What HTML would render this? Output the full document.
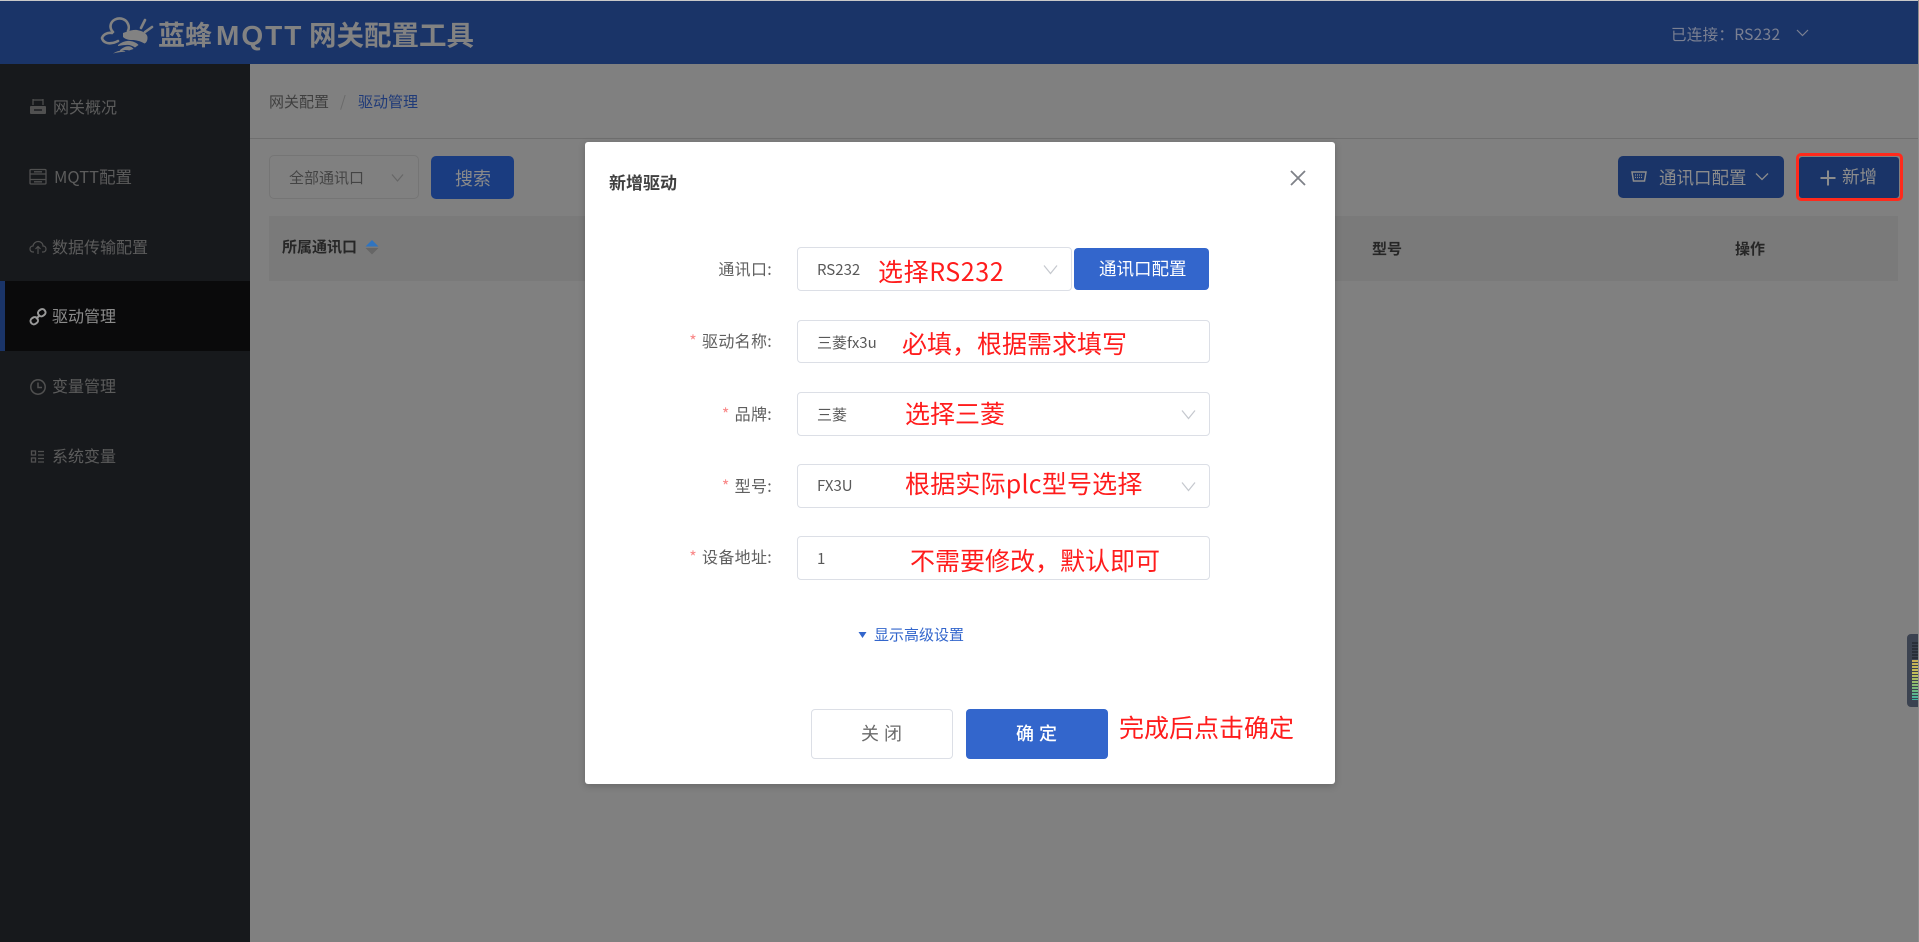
<!DOCTYPE html>
<html lang="zh-CN">
<head>
<meta charset="utf-8">
<title>新增驱动</title>
<style>
html,body{margin:0;padding:0;width:1919px;height:942px;overflow:hidden;background:#808080}
body{position:relative;font-family:"Noto Sans CJK SC","Liberation Sans",sans-serif}
div,span,svg{position:absolute;box-sizing:border-box}
.t{white-space:nowrap;height:30px;line-height:30px}
.side{color:#5c5c5c;font-size:16px;left:53px}
.lab{color:#5f5f5f;font-size:16px;right:1147px;text-align:right;letter-spacing:.3px}
.lab b{color:#f98a8a;font-weight:400;margin-right:5px}
.box{background:#fff;border:1px solid #dcdfe6;border-radius:4px;left:797px;width:413px}
.val{color:#595959;font-size:15px;left:817px}
.red{color:#ff1c1c;font-size:25px;letter-spacing:0}
.che{fill:none;stroke:#c5c8ce;stroke-width:1.2}
.logo{color:#828282;font-weight:700;font-family:"Liberation Sans","Noto Sans CJK SC",sans-serif}
</style>
</head>
<body>
<!-- top strip -->
<div style="left:0;top:0;width:1919px;height:1px;background:#c9c9c9"></div>
<!-- header -->
<div style="left:0;top:1px;width:1918px;height:63px;background:#1a3468"></div>
<div style="left:1918px;top:0;width:1px;height:942px;background:#8e8e8e"></div>
<!-- logo -->
<svg style="left:98px;top:12px" width="58" height="44" viewBox="0 0 58 44">
  <g fill="none" stroke="#828282" stroke-width="2.6" stroke-linecap="round">
    <path d="M15 20C11 16 12 10 17 7.500C22 5 28 7 30 12C31 14 31 17 30 19"/>
    <path d="M14 21C9 20 5 23 4 26C5 30 9 32 14 31C16 31 18 30 20 29"/>
    <path d="M43 16L47 8"/><path d="M47 20L54 15"/>
  </g>
  <path d="M25 21C30 19 35 17.500 39 18C45 19 50 22 49.500 26C49.500 29 48 31 46.500 31.500C42 29 38 28 34 28C30 28 27 27 25 25Z" fill="#828282"/>
  <path d="M20 33C24 30 28 28.500 32 29C36 29.500 39 31 40.500 33L37 35.500C34 33.500 31 32.500 28 33C25 33.200 22 33.600 20 34Z" fill="#828282"/>
  <path d="M22 38C25 35.500 28 34 31 34.300C33 34.500 35 36 35.500 37L31 38.500C28 37.500 25 38 22 39Z" fill="#828282"/>
  <path d="M15 41.500C18 39.500 21 38.500 24 38.500C25.500 38.700 27 39 27.500 39.800C24 39.800 19 40.500 15 41.500Z" fill="#828282"/>
</svg>
<span class="t logo" style="left:158px;top:21px;font-size:27px;letter-spacing:0">蓝蜂</span>
<span class="t logo" style="left:216px;top:21px;font-size:28px;letter-spacing:2px">MQTT</span>
<span class="t logo" style="left:309px;top:21px;font-size:27.500px;letter-spacing:0">网关配置工具</span>
<span class="t" style="left:1671px;top:19px;color:#7b8092;font-size:15.500px;letter-spacing:.3px">已连接：RS232</span>
<svg style="left:1796px;top:29px" width="13" height="8" viewBox="0 0 13 8"><path d="M1 1L6.500 6.500L12 1" fill="none" stroke="#7b8092" stroke-width="1.200"/></svg>

<!-- sidebar -->
<div style="left:0;top:64px;width:250px;height:878px;background:#17191c"></div>
<div style="left:0;top:281px;width:250px;height:70px;background:#0a0a0b"></div>
<div style="left:0;top:281px;width:5px;height:70px;background:#1a3468"></div>

<svg style="left:29px;top:98px" width="18" height="18" viewBox="0 0 18 18">
  <path d="M4 1V7M14 1V7M4 2H14" fill="none" stroke="#505050" stroke-width="1.200"/>
  <rect x="1" y="8" width="16" height="8" rx="1" fill="#505050"/>
  <path d="M5 12H13" stroke="#17191c" stroke-width="1.400"/>
</svg>
<span class="t side" style="top:91px;font-size:16px">网关概况</span>
<svg style="left:29px;top:168px" width="18" height="18" viewBox="0 0 18 18" fill="none" stroke="#505050" stroke-width="1.300">
  <rect x="1" y="1.500" width="16" height="14.500" rx="1"/><path d="M1 6H17M1 11.500H17M5 3.800H13M5 13.800H13"/>
</svg>
<span class="t side" style="top:161px;left:54px;font-size:16.500px">MQTT配置</span>
<svg style="left:29px;top:238px" width="18" height="18" viewBox="0 0 18 18" fill="none" stroke="#505050" stroke-width="1.200">
  <path d="M5 14H4C2 14 1 12.500 1 11C1 9 2.500 8 4 8C4.500 5 7 3.500 9 3.500C12 3.500 14 5.500 14 8C16 8 17 9.500 17 11C17 12.500 16 14 14 14H13"/>
  <path d="M9 16V9M6.500 11L9 8.500L11.500 11"/>
</svg>
<span class="t side" style="top:231px;left:52px">数据传输配置</span>
<svg style="left:29px;top:308px" width="18" height="18" viewBox="0 0 18 18" fill="none" stroke="#9a9a9a" stroke-width="2">
  <rect x="9" y="1.500" width="7.500" height="6.500" rx="3" transform="rotate(-35 12.700 4.700)"/>
  <rect x="1.500" y="9.500" width="7.500" height="6.500" rx="3" transform="rotate(-35 5.200 12.700)"/>
  <path d="M7 11L11 7"/>
</svg>
<span class="t side" style="top:300px;left:52px;color:#8c8c8c">驱动管理</span>
<svg style="left:29px;top:378px" width="18" height="18" viewBox="0 0 18 18" fill="none" stroke="#505050" stroke-width="1.500">
  <circle cx="9" cy="9" r="7.200"/><path d="M9 4.500V9.500H13"/>
</svg>
<span class="t side" style="top:370px;left:52px">变量管理</span>
<svg style="left:30px;top:449px" width="16" height="16" viewBox="0 0 16 16" fill="none" stroke="#505050" stroke-width="1.300">
  <rect x="1.500" y="2" width="4" height="4"/><rect x="1.500" y="9" width="4" height="4"/>
  <path d="M8 2.500H14M8 6H14M8 9.500H14M8 13H14"/>
</svg>
<span class="t side" style="top:440px;left:52px">系统变量</span>

<!-- main -->
<span class="t" style="left:269px;top:87px;font-size:15px;color:#3f3f3f">网关配置</span>
<span class="t" style="left:340px;top:87px;font-size:15px;color:#6a6a6a">/</span>
<span class="t" style="left:358px;top:87px;font-size:15px;color:#1f3a78">驱动管理</span>
<div style="left:250px;top:138px;width:1668px;height:1px;background:#6f6f6f"></div>

<div style="left:269px;top:155px;width:150px;height:44px;border:1px solid #757575;border-radius:5px"></div>
<span class="t" style="left:289px;top:163px;font-size:15px;color:#444">全部通讯口</span>
<svg style="left:391px;top:173px" width="13" height="10" viewBox="0 0 13 10"><path d="M1 1.500L6.500 8L12 1.500" fill="none" stroke="#666" stroke-width="1.200"/></svg>
<div style="left:431px;top:156px;width:83px;height:43px;background:#1a3c80;border-radius:5px"></div>
<span class="t" style="left:455px;top:163px;font-size:18px;color:#8a8a8a">搜索</span>

<div style="left:1618px;top:156px;width:166px;height:42px;background:#1a3468;border-radius:5px"></div>
<svg style="left:1631px;top:170px" width="16" height="13" viewBox="0 0 16 13" fill="none" stroke="#8c8c8c" stroke-width="1.500"><path d="M1 2H15L13.500 11H2.500Z"/><path d="M4 5H12M4 7.500H12" stroke-width="1.200" stroke-dasharray="1 1"/></svg>
<span class="t" style="left:1659px;top:163px;font-size:17.500px;color:#8c8c8c">通讯口配置</span>
<svg style="left:1755px;top:172px" width="14" height="10" viewBox="0 0 14 10"><path d="M1 1.500L7 7.500L13 1.500" fill="none" stroke="#8c8c8c" stroke-width="1.300"/></svg>

<div style="left:1799px;top:157px;width:100px;height:41px;background:#1a3468;border-radius:3px"></div>
<div style="left:1796px;top:153px;width:107px;height:48px;border:3.500px solid #ff2a1c;border-radius:5px"></div>
<svg style="left:1820px;top:170px" width="16" height="16" viewBox="0 0 16 16"><path d="M8 0.500V15.500M0.500 8H15.500" stroke="#8c8c8c" stroke-width="2"/></svg>
<span class="t" style="left:1842px;top:162px;font-size:17.500px;color:#8c8c8c">新增</span>

<div style="left:269px;top:216px;width:1629px;height:65px;background:#7a7a7a"></div>
<span class="t" style="left:282px;top:232px;font-size:15px;font-weight:700;color:#262626">所属通讯口</span>
<svg style="left:365px;top:240px" width="14" height="15" viewBox="0 0 14 15"><path d="M7 0L13.500 6.500H0.500Z" fill="#2f74c0"/><path d="M7 14.500L13.500 8H0.500Z" fill="#666"/></svg>
<span class="t" style="left:1372px;top:234px;font-size:15px;font-weight:700;color:#262626">型号</span>
<span class="t" style="left:1735px;top:234px;font-size:15px;font-weight:700;color:#262626">操作</span>

<!-- right widget -->
<div style="left:1907px;top:634px;width:11px;height:73px;background:#3b4250;border-radius:4px 0 0 4px"></div>
<div style="left:1912px;top:642px;width:6px;height:58px;background:repeating-linear-gradient(180deg,rgba(59,66,80,0) 0,rgba(59,66,80,0) 2px,#3b4250 2px,#3b4250 3px),linear-gradient(180deg,#292e38 0,#292e38 30%,#c9ae55 31%,#c2c05a 55%,#7dbb78 78%,#3fb3a2 100%)"></div>

<!-- modal -->
<div style="left:585px;top:142px;width:750px;height:642px;background:#fff;border-radius:3px;box-shadow:0 2px 8px rgba(0,0,0,.2)"></div>
<span class="t" style="left:609px;top:167px;font-size:17px;font-weight:700;color:#404040">新增驱动</span>
<svg style="left:1290px;top:170px" width="16" height="16" viewBox="0 0 16 16"><path d="M1 1L15 15M15 1L1 15" stroke="#7e8188" stroke-width="1.800"/></svg>

<!-- row 1 -->
<span class="t lab" style="top:253px">通讯口:</span>
<div class="box" style="top:247px;width:275px;height:44px"></div>
<span class="t val" style="top:255px">RS232</span>
<svg class="che" style="left:1043px;top:264px" width="15" height="11" viewBox="0 0 15 11"><path d="M1 1.500L7.500 9.500L14 1.500"/></svg>
<div style="left:1074px;top:248px;width:135px;height:42px;background:#3366cc;border-radius:4px"></div>
<span class="t" style="left:1099px;top:254px;font-size:17.500px;color:#fff">通讯口配置</span>
<span class="t red" style="left:878px;top:256px;letter-spacing:.6px">选择RS232</span>

<!-- row 2 -->
<span class="t lab" style="top:325px"><b>*</b>驱动名称:</span>
<div class="box" style="top:320px;height:43px"></div>
<span class="t val" style="top:328px">三菱fx3u</span>
<span class="t red" style="left:902px;top:328px">必填，根据需求填写</span>

<!-- row 3 -->
<span class="t lab" style="top:398px"><b>*</b>品牌:</span>
<div class="box" style="top:392px;height:44px"></div>
<span class="t val" style="top:400px">三菱</span>
<svg class="che" style="left:1181px;top:409px" width="15" height="11" viewBox="0 0 15 11"><path d="M1 1.500L7.500 9.500L14 1.500"/></svg>
<span class="t red" style="left:905px;top:398px">选择三菱</span>

<!-- row 4 -->
<span class="t lab" style="top:470px"><b>*</b>型号:</span>
<div class="box" style="top:464px;height:44px"></div>
<span class="t val" style="top:471px">FX3U</span>
<svg class="che" style="left:1181px;top:481px" width="15" height="11" viewBox="0 0 15 11"><path d="M1 1.500L7.500 9.500L14 1.500"/></svg>
<span class="t red" style="left:905px;top:468px;letter-spacing:.2px">根据实际plc型号选择</span>

<!-- row 5 -->
<span class="t lab" style="top:541px"><b>*</b>设备地址:</span>
<div class="box" style="top:536px;height:44px"></div>
<span class="t val" style="top:544px">1</span>
<span class="t red" style="left:910px;top:545px">不需要修改，默认即可</span>

<!-- advanced -->
<svg style="left:858px;top:631px" width="9" height="8" viewBox="0 0 9 8"><path d="M0.500 1H8.500L4.500 7Z" fill="#3366cc"/></svg>
<span class="t" style="left:874px;top:620px;font-size:15px;color:#3366cc">显示高级设置</span>

<!-- buttons -->
<div style="left:811px;top:709px;width:142px;height:50px;background:#fff;border:1px solid #dcdfe6;border-radius:4px"></div>
<span class="t" style="left:861px;top:718px;font-size:18px;letter-spacing:5px;color:#6a6a6a">关闭</span>
<div style="left:966px;top:709px;width:142px;height:50px;background:#3366cc;border-radius:4px"></div>
<span class="t" style="left:1016px;top:718px;font-size:18px;font-weight:500;letter-spacing:5px;color:#fff">确定</span>
<span class="t red" style="left:1119px;top:712px">完成后点击确定</span>
</body>
</html>
